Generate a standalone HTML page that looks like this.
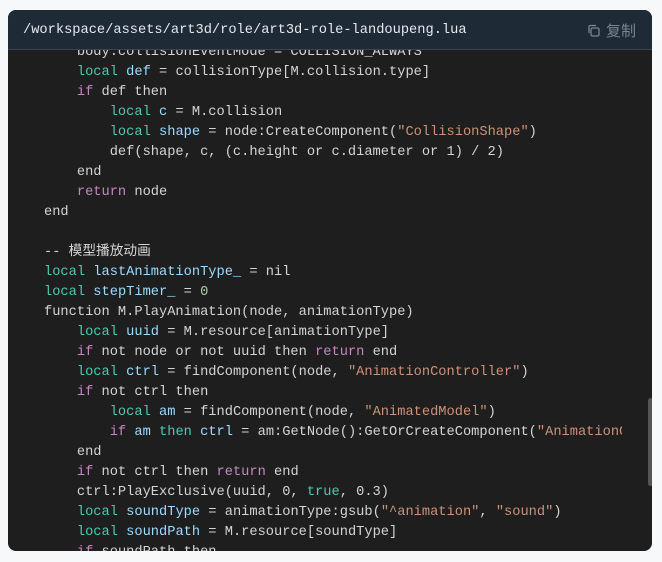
<!DOCTYPE html>
<html><head><meta charset="utf-8"><style>
body{margin:0;background:#f6f8fa;width:662px;height:562px;overflow:hidden}
.card{position:absolute;left:8px;top:10px;width:644px;height:541px;border-radius:8px;overflow:hidden;background:#1e1e1e}
.hd{position:absolute;left:0;top:0;width:644px;height:40px;background:#1f2a37;border-bottom:1px solid #3a4552;box-sizing:border-box}
.path{position:absolute;left:15px;top:13px;font:13.7px "Liberation Mono",monospace;color:#e6e9ee}
.copy{position:absolute;right:16px;top:10px;font:15px "Liberation Sans","Noto Sans CJK SC",sans-serif;color:#7d8590}
.code{position:absolute;left:0;top:40px;width:614px;height:501px;overflow:hidden}
pre{margin:0;position:absolute;left:36px;top:-7px;font:13.7px/20px "Liberation Mono","Noto Sans CJK SC",monospace;color:#d4d4d4}
.k{color:#4ec9b0}.c{color:#c586c0}.v{color:#9cdcfe}.s{color:#ce9178}.n{color:#b5cea8}
.sb{position:absolute;left:640px;top:388px;width:5px;height:88px;background:#555;border-radius:3px}
</style></head><body>
<div class="card">
<div class="hd"><span class="path">/workspace/assets/art3d/role/art3d-role-landoupeng.lua</span><span class="copy"><svg width="13" height="13" viewBox="0 0 13 13" style="vertical-align:-1px;margin-right:6px"><rect x="4" y="4" width="8" height="8" rx="1.5" fill="none" stroke="#7d8590" stroke-width="1.3"/><path d="M2 9V2.5A1 1 0 0 1 3 1.5H9" fill="none" stroke="#7d8590" stroke-width="1.3"/></svg>复制</span></div>
<div class="code"><pre>    body.collisionEventMode = COLLISION_ALWAYS
    <span class="k">local</span> <span class="v">def</span> = collisionType[M.collision.type]
    <span class="c">if</span> def then
        <span class="k">local</span> <span class="v">c</span> = M.collision
        <span class="k">local</span> <span class="v">shape</span> = node:CreateComponent(<span class="s">"CollisionShape"</span>)
        def(shape, c, (c.height or c.diameter or 1) / 2)
    end
    <span class="c">return</span> node
end

-- 模型播放动画
<span class="k">local</span> <span class="v">lastAnimationType_</span> = nil
<span class="k">local</span> <span class="v">stepTimer_</span> = <span class="n">0</span>
function M.PlayAnimation(node, animationType)
    <span class="k">local</span> <span class="v">uuid</span> = M.resource[animationType]
    <span class="c">if</span> not node or not uuid then <span class="c">return</span> end
    <span class="k">local</span> <span class="v">ctrl</span> = findComponent(node, <span class="s">"AnimationController"</span>)
    <span class="c">if</span> not ctrl then
        <span class="k">local</span> <span class="v">am</span> = findComponent(node, <span class="s">"AnimatedModel"</span>)
        <span class="c">if</span> <span class="v">am</span> <span class="k">then</span> <span class="v">ctrl</span> = am:GetNode():GetOrCreateComponent(<span class="s">"AnimationController"</span>)
    end
    <span class="c">if</span> not ctrl then <span class="c">return</span> end
    ctrl:PlayExclusive(uuid, 0, <span class="k">true</span>, 0.3)
    <span class="k">local</span> <span class="v">soundType</span> = animationType:gsub(<span class="s">"^animation"</span>, <span class="s">"sound"</span>)
    <span class="k">local</span> <span class="v">soundPath</span> = M.resource[soundType]
    <span class="c">if</span> soundPath then
</pre></div>
<div class="sb"></div>
</div>
</body></html>
